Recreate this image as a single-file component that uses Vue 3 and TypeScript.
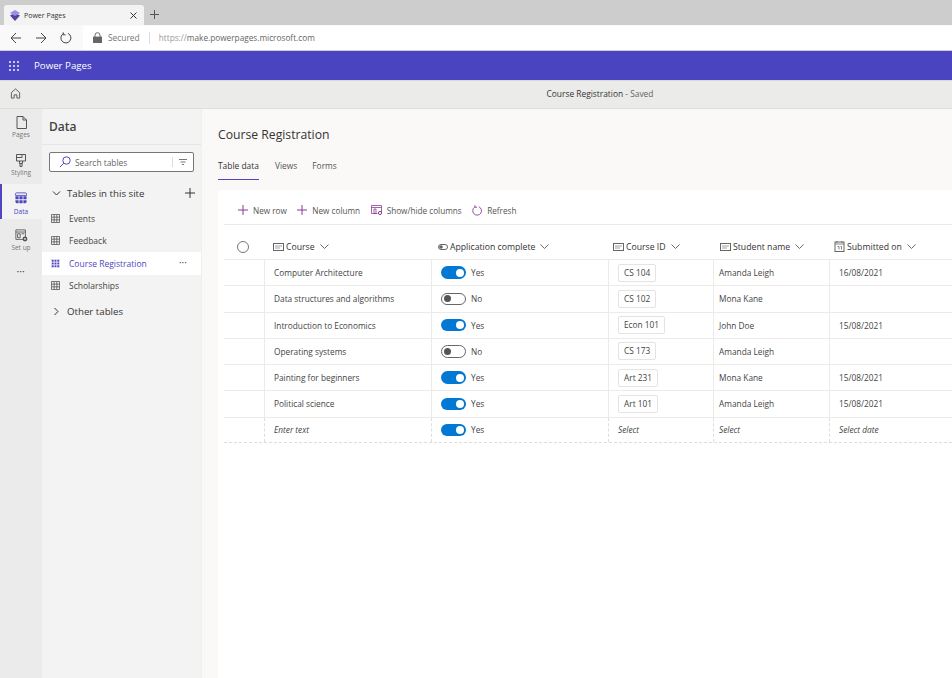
<script setup lang="ts">
interface Row { course: string; on: boolean; id: string; student: string; date: string }
const rows: Row[] = [
  { course: 'Computer Architecture', on: true, id: 'CS 104', student: 'Amanda Leigh', date: '16/08/2021' },
  { course: 'Data structures and algorithms', on: false, id: 'CS 102', student: 'Mona Kane', date: '' },
  { course: 'Introduction to Economics', on: true, id: 'Econ 101', student: 'John Doe', date: '15/08/2021' },
  { course: 'Operating systems', on: false, id: 'CS 173', student: 'Amanda Leigh', date: '' },
  { course: 'Painting for beginners', on: true, id: 'Art 231', student: 'Mona Kane', date: '15/08/2021' },
  { course: 'Political science', on: true, id: 'Art 101', student: 'Amanda Leigh', date: '15/08/2021' },
]
const tables = [
  { name: 'Events', active: false },
  { name: 'Feedback', active: false },
  { name: 'Course Registration', active: true },
  { name: 'Scholarships', active: false },
]
</script>

<template>
  <div class="page">
    <div class="tabstrip">
      <div class="tab">
        <svg class="tablogo" width="12" height="11" viewBox="0 0 12 11"><path d="M1 5.500 6 3 11 5.500 6 11z" fill="#5a3f9e"/><path d="M6 0 11 3 6 6 1 3z" fill="#9d8ee6"/></svg>
        <span class="tabtitle">Power Pages</span>
        <svg class="tabclose" width="7" height="7" viewBox="0 0 7 7"><path d="M.5 .5l6 6M6.500 .5l-6 6" stroke="#333" stroke-width="1"/></svg>
      </div>
      <svg class="newtab" width="9" height="9" viewBox="0 0 9 9"><path d="M4.500 0v9M0 4.500h9" stroke="#555" stroke-width="1"/></svg>
    </div>

    <div class="addrbar">
      <svg width="12" height="12" viewBox="0 0 12 12" class="nav"><path d="M11 6H1M6 1 1 6l5 5" fill="none" stroke="#444" stroke-width="1"/></svg>
      <svg width="12" height="12" viewBox="0 0 12 12" class="nav"><path d="M1 6h10M6 1l5 5-5 5" fill="none" stroke="#444" stroke-width="1"/></svg>
      <svg width="12" height="12" viewBox="0 0 12 12" class="nav"><path d="M3.400 1.600A5 5 0 1 0 8 1.400M3.200 .4v2.400h2.400" fill="none" stroke="#444" stroke-width="1"/></svg>
      <div class="urlfield">
        <svg width="9" height="11" viewBox="0 0 9 11"><path d="M2 5V3.200a2.500 2.500 0 0 1 5 0V5" fill="none" stroke="#666" stroke-width="1"/><rect y="4.600" width="9" height="6.400" fill="#666"/></svg>
        <span class="secured">Secured</span>
        <span class="urlsep"></span>
        <span class="url"><span class="urlscheme">https://</span>make.powerpages.microsoft.com</span>
      </div>
    </div>

    <header class="brandbar">
      <svg width="10" height="10" viewBox="0 0 10 10" fill="#fff">
        <circle v-for="p in [1,5,9].flatMap(y => [1,5,9].map(x => [x,y]))" :key="p.join()" :cx="p[0]" :cy="p[1]" r="0.95"/>
      </svg>
      <span class="brandname">Power Pages</span>
    </header>

    <div class="subbar">
      <svg width="11" height="11" viewBox="0 0 11 12"><path d="M1 5 5.500 1 10 5v6H7V7.500H4V11H1z" fill="none" stroke="#555" stroke-width="1"/></svg>
      <div class="subtitle">Course Registration <span class="saved">- Saved</span></div>
    </div>

    <div class="body">
      <nav class="rail">
        <div class="railitem">
          <svg width="11" height="13" viewBox="0 0 11 13"><path d="M1 .5h6l3.500 3.500v8.500H1zM7 .5V4h3.500" fill="none" stroke="#555" stroke-width="1"/></svg>
          <span>Pages</span>
        </div>
        <div class="railitem">
          <svg width="10" height="13" viewBox="0 0 10 13"><path d="M.5 .5h9v6.500h-9zM.5 3.500h5.500v-3M3.500 7v2.500h3V7M4 9.500v3h2v-3" fill="none" stroke="#555" stroke-width="1"/></svg>
          <span>Styling</span>
        </div>
        <div class="railitem active">
          <svg width="12" height="12" viewBox="0 0 14 14"><path d="M2 1h10a1.500 1.500 0 0 1 1.500 1.500V4H.5V2.500A1.500 1.500 0 0 1 2 1z" fill="none" stroke="#4f46c0"/><path d="M.5 5h3.700v3.500H.5zM5.100 5h3.800v3.500H5.100zM9.800 5h3.700v3.500H9.800zM.5 9.500h3.700V13H2A1.500 1.500 0 0 1 .5 11.500zM5.100 9.500h3.800V13H5.100zM9.800 9.500h3.700v2a1.500 1.500 0 0 1-1.500 1.500H9.800z" fill="#4f46c0"/></svg>
          <span>Data</span>
        </div>
        <div class="railitem">
          <svg width="13" height="13" viewBox="0 0 15 15"><path d="M1 1h11v11H1zM1 3.500h11M3 5.500h3v4.500H3zM7.500 5.500h3" fill="none" stroke="#555"/><circle cx="11.500" cy="11.500" r="2.800" fill="#555"/><circle cx="11.500" cy="11.500" r="1" fill="#ebebeb"/></svg>
          <span>Set up</span>
        </div>
        <div class="raildots">•••</div>
      </nav>

      <aside class="panel">
        <h2 class="paneltitle">Data</h2>
        <div class="search">
          <svg width="12" height="12" viewBox="0 0 12 12"><circle cx="7.500" cy="4.500" r="3.700" fill="none" stroke="#4f46c0"/><path d="M4.800 7.200 1 11" stroke="#4f46c0" stroke-width="1"/></svg>
          <span class="searchtext">Search tables</span>
          <span class="searchsep"></span>
          <svg width="8" height="6" viewBox="0 0 8 6"><path d="M0 .5h8M1.500 3h5M3 5.500h2" stroke="#777" stroke-width="1"/></svg>
        </div>
        <div class="grouphead">
          <svg width="9" height="5" viewBox="0 0 9 5"><path d="M1 .5l3.500 3.500L8 .5" fill="none" stroke="#333"/></svg>
          <span class="grouptitle">Tables in this site</span>
          <svg class="addtable" width="10" height="10" viewBox="0 0 10 10"><path d="M5 0v10M0 5h10" stroke="#333"/></svg>
        </div>
        <div v-for="t in tables" :key="t.name" class="tableitem" :class="{ on: t.active }">
          <svg width="9" height="9" viewBox="0 0 10 10">
            <rect v-if="t.active" x="0" y="0" width="10" height="10" rx="1" fill="#4f46c0"/>
            <path :stroke="t.active ? '#fff' : '#555'" fill="none" stroke-width=".9" d="M.5 .5h9v9h-9zM3.500 .5v9M6.500 .5v9M.5 3.500h9M.5 6.500h9"/>
          </svg>
          <span class="tablename">{{ t.name }}</span>
          <span v-if="t.active" class="itemmore">•••</span>
        </div>
        <div class="grouphead other">
          <svg width="5" height="9" viewBox="0 0 5 9"><path d="M.5 1 4 4.500.5 8" fill="none" stroke="#333"/></svg>
          <span class="grouptitle">Other tables</span>
        </div>
      </aside>

      <main class="main">
        <h1 class="maintitle">Course Registration</h1>
        <div class="tabs">
          <span class="pivot current">Table data</span>
          <span class="pivot">Views</span>
          <span class="pivot">Forms</span>
        </div>
        <section class="card">
          <div class="toolbar">
            <span class="tool">
              <svg width="10" height="10" viewBox="0 0 10 10"><path d="M5 0v10M0 5h10" stroke="#8a3d8f"/></svg>New row
            </span>
            <span class="tool">
              <svg width="10" height="10" viewBox="0 0 10 10"><path d="M5 0v10M0 5h10" stroke="#8a3d8f"/></svg>New column
            </span>
            <span class="tool">
              <svg width="11" height="10" viewBox="0 0 11 10"><path d="M.5 .5h10v7M.5 .5v8h6M.5 2.500h10M3 4h2v4.500H3z" fill="none" stroke="#8a3d8f" stroke-width=".8"/><circle cx="9" cy="8" r="1.600" fill="none" stroke="#8a3d8f"/></svg>Show/hide columns
            </span>
            <span class="tool">
              <svg width="10" height="11" viewBox="0 0 11 12"><path d="M3 2.300a4.800 4.800 0 1 0 4.500-.4M3.200 .2v2.200h2.300" fill="none" stroke="#8a3d8f"/></svg>Refresh
            </span>
          </div>

          <div class="grid headrow">
            <div class="hcell checkcell"><span class="radio"></span></div>
            <div class="hcell">
              <svg class="ftype" width="11" height="8" viewBox="0 0 11 8"><rect x=".5" y=".5" width="10" height="7" fill="none" stroke="#666"/><path d="M2 3h7M2 5h5" stroke="#888" stroke-width=".8"/></svg>
              <span>Course</span><svg class="caret" width="9" height="5" viewBox="0 0 9 5"><path d="M.5 .5l4 4 4-4" fill="none" stroke="#666"/></svg>
            </div>
            <div class="hcell">
              <svg class="ftype" width="10" height="6" viewBox="0 0 10 6"><rect x=".5" y=".5" width="9" height="5" rx="2.500" fill="none" stroke="#666"/><circle cx="3" cy="3" r="1.800" fill="#666"/></svg>
              <span>Application complete</span><svg class="caret" width="9" height="5" viewBox="0 0 9 5"><path d="M.5 .5l4 4 4-4" fill="none" stroke="#666"/></svg>
            </div>
            <div class="hcell">
              <svg class="ftype" width="11" height="8" viewBox="0 0 11 8"><rect x=".5" y=".5" width="10" height="7" fill="none" stroke="#666"/><path d="M2 3h7M2 5h5" stroke="#888" stroke-width=".8"/></svg>
              <span>Course ID</span><svg class="caret" width="9" height="5" viewBox="0 0 9 5"><path d="M.5 .5l4 4 4-4" fill="none" stroke="#666"/></svg>
            </div>
            <div class="hcell">
              <svg class="ftype" width="11" height="8" viewBox="0 0 11 8"><rect x=".5" y=".5" width="10" height="7" fill="none" stroke="#666"/><path d="M2 3h7M2 5h5" stroke="#888" stroke-width=".8"/></svg>
              <span>Student name</span><svg class="caret" width="9" height="5" viewBox="0 0 9 5"><path d="M.5 .5l4 4 4-4" fill="none" stroke="#666"/></svg>
            </div>
            <div class="hcell">
              <svg class="ftype" width="11" height="11" viewBox="0 0 10 11"><rect x=".5" y="1" width="9" height="9.500" fill="none" stroke="#666"/><path d="M.5 3h9M2.500 0v2M7.500 0v2M3 5.500h1.500v3M6 5.500h1v3" fill="none" stroke="#666" stroke-width=".8"/></svg>
              <span>Submitted on</span><svg class="caret" width="9" height="5" viewBox="0 0 9 5"><path d="M.5 .5l4 4 4-4" fill="none" stroke="#666"/></svg>
            </div>
          </div>

          <div v-for="r in rows" :key="r.course" class="grid datarow">
            <div class="cell first"></div>
            <div class="cell">{{ r.course }}</div>
            <div class="cell">
              <span class="toggle" :class="{ off: !r.on }"><i></i></span>
              <span>{{ r.on ? 'Yes' : 'No' }}</span>
            </div>
            <div class="cell"><span class="chip">{{ r.id }}</span></div>
            <div class="cell">{{ r.student }}</div>
            <div class="cell">{{ r.date }}</div>
          </div>

          <div class="grid newrow">
            <div class="cell first"></div>
            <div class="cell italic">Enter text</div>
            <div class="cell"><span class="toggle"><i></i></span><span>Yes</span></div>
            <div class="cell italic">Select</div>
            <div class="cell italic">Select</div>
            <div class="cell italic">Select date</div>
          </div>
        </section>
      </main>
    </div>
  </div>
</template>

<style>
html, body { margin: 0; overflow: hidden; }
</style>

<style scoped>
.page {
  width: 952px; height: 678px; display: flex; flex-direction: column; overflow: hidden;
  font-family: "Open Sans", "Noto Sans", sans-serif; color: #323130; background: #fff;
}
.tabstrip { height: 25px; background: #cdcdcd; display: flex; align-items: flex-end; padding-left: 4px; flex: none; }
.tab {
  width: 140px; height: 20px; background: #f3f3f3; border-radius: 3px 3px 0 0; display: flex; align-items: center;
  padding: 0 7px 0 5px; box-sizing: border-box;
}
.tablogo { margin-right: 3px; }
.tabtitle { font-size: 7px; color: #333; flex: 1; }
.newtab { margin: 0 0 6px 6px; }
.addrbar { height: 25px; background: #f9f9f9; border-bottom: 1px solid #cfcfcf; display: flex; align-items: center; padding-left: 10px; flex: none; }
.nav { margin-right: 13px; }
.nav:nth-child(3) { margin-right: 11px; }
.urlfield { flex: 1; height: 24px; background: #fff; display: flex; align-items: center; padding-left: 10px; }
.secured { font-size: 8.400px; color: #777; margin-left: 6px; }
.urlsep { width: 1px; height: 12px; background: #ddd; margin: 0 9px; }
.url { font-size: 8.250px; color: #666; }
.urlscheme { color: #999; }
.brandbar { height: 29px; background: #4a44c0; display: flex; align-items: center; padding-left: 9px; flex: none; border-bottom: 1px solid #d8d8d8; }
.brandname { color: #fff; font-size: 9.700px; margin-left: 15px; }
.subbar { height: 28px; background: #ebebe9; display: flex; align-items: center; padding: 0 0 2px 10px; flex: none; border-bottom: 1px solid #dedede; box-sizing: border-box; }
.subtitle { flex: 1; text-align: center; font-size: 8.400px; color: #333; padding-left: 227px; }
.saved { color: #666; }
.body { flex: 1; display: flex; min-height: 0; }
.rail { width: 42px; background: #ebebeb; display: flex; flex-direction: column; flex: none; }
.railitem { height: 37.700px; display: flex; flex-direction: column; align-items: center; gap: 1px; padding-top: 7px; font-size: 6.500px; line-height: 9px; color: #777; box-sizing: border-box; }
.railitem.active { background: #f3f3f3; color: #4f46c0; border-left: 2px solid #4f46c0; padding-right: 2px; height: 35px; margin-bottom: 2.700px; padding-top: 8px; gap: 2.500px; }
.raildots { text-align: center; font-size: 6px; color: #444; margin-top: 8px; letter-spacing: .5px; }
.panel { width: 160px; background: #f3f3f3; border-right: 1px solid #f0efee; flex: none; box-sizing: border-box; }
.paneltitle { margin: 0; height: 35px; line-height: 35px; padding-left: 7px; font-size: 12px; font-weight: 600; color: #444; border-bottom: 1px solid #e6e6e6; box-sizing: content-box; }
.search { margin: 7px 7px 0 7px; height: 20px; box-sizing: border-box; background: #fff; border: 1px solid #777; border-radius: 2px; display: flex; align-items: center; padding: 0 6px 0 9px; }
.searchtext { flex: 1; font-size: 8.400px; color: #666; margin-left: 4px; }
.searchsep { width: 1px; height: 10px; background: #ddd; margin-right: 6px; }
.grouphead { display: flex; align-items: center; height: 22px; padding-left: 10px; margin-top: 10px; padding-right: 6px; }
.grouptitle { font-size: 9.700px; color: #333; margin-left: 6px; flex: 1; }
.grouphead.other { margin-top: 3px; padding-left: 12px; }
.grouphead.other .grouptitle { margin-left: 8px; }
.grouphead + .tableitem { margin-top: 3px; }
.tableitem { height: 22.500px; display: flex; align-items: center; padding-left: 9px; font-size: 8.500px; color: #444; }
.tableitem.on { background: #fff; color: #4f46c0; }
.tablename { margin-left: 9px; flex: 1; }
.itemmore { font-size: 5.500px; letter-spacing: .5px; color: #444; margin-right: 14px; }
.main { flex: 1; background: #faf9f8; padding: 0 0 0 16px; min-width: 0; display: flex; flex-direction: column; }
.maintitle { margin: 17px 0 0; font-size: 12.200px; font-weight: 500; color: #333; line-height: 18px; height: 18px; }
.tabs { display: flex; gap: 15px; margin-top: 12px; height: 24px; }
.pivot { font-size: 8.400px; color: #555; padding-top: 4px; box-sizing: border-box; height: 24px; }
.pivot.current { color: #323130; font-weight: 500; border-bottom: 1px solid #4f46c0; width: 41px; white-space: nowrap; margin-right: 1px; }
.card { margin-top: 10px; flex: 1; background: #fff; border-radius: 3px 0 0 0; padding: 0 0 0 6px; }
.toolbar { height: 35px; display: flex; align-items: center; padding: 6px 0 0 14px; gap: 10.500px; border-bottom: 1px solid #edebe9; box-sizing: border-box; font-size: 8.200px; color: #555; }
.tool { display: inline-flex; align-items: center; gap: 5px; white-space: nowrap; }
.grid { display: grid; grid-template-columns: 40px 167px 177px 105px 116px 1fr; }
.headrow { height: 35px; border-bottom: 1px solid #edebe9; box-sizing: border-box; padding-top: 9px; }
.hcell { display: flex; align-items: center; padding-left: 9px; font-size: 8.700px; font-weight: 500; color: #333; white-space: nowrap; }
.hcell:nth-child(3) { padding-left: 7px; }
.hcell:nth-child(4) { padding-left: 5px; }
.hcell:nth-child(5) { padding-left: 7px; }
.hcell:nth-child(6) { padding-left: 5px; }
.checkcell { padding-left: 13px; }
.radio { width: 10px; height: 10px; border: 1px solid #777; border-radius: 50%; }
.ftype { margin-right: 2px; }
.caret { margin-left: 5px; }
.datarow { height: 26.270px; border-bottom: 1px solid #edebe9; box-sizing: border-box; }
.cell { display: flex; align-items: center; padding-left: 9px; font-size: 8.300px; color: #444; border-left: 1px solid #edebe9; white-space: nowrap; }
.cell:nth-child(5) { padding-left: 5px; }
.cell.first { border-left: 0; }
.chip { border: 1px solid #e6e4e2; border-radius: 2px; height: 18px; line-height: 16px; box-sizing: border-box; padding: 0 5px; }
.toggle { width: 25px; height: 12.500px; border-radius: 6.500px; background: #0078d4; position: relative; margin-right: 5px; box-sizing: border-box; }
.toggle i { position: absolute; right: 2px; top: 2.200px; width: 8px; height: 8px; border-radius: 50%; background: #fff; }
.toggle.off { background: #fff; border: 1px solid #666; }
.toggle.off i { left: 2px; right: auto; top: 1.700px; width: 7px; height: 7px; background: #555; }
.newrow { height: 25.500px; border-bottom: 1px dashed #ddd; box-sizing: border-box; }
.newrow .cell { border-left: 1px dashed #ddd; }
.newrow .cell.first { border: 0; }
.italic { font-style: italic; color: #444; }
</style>
